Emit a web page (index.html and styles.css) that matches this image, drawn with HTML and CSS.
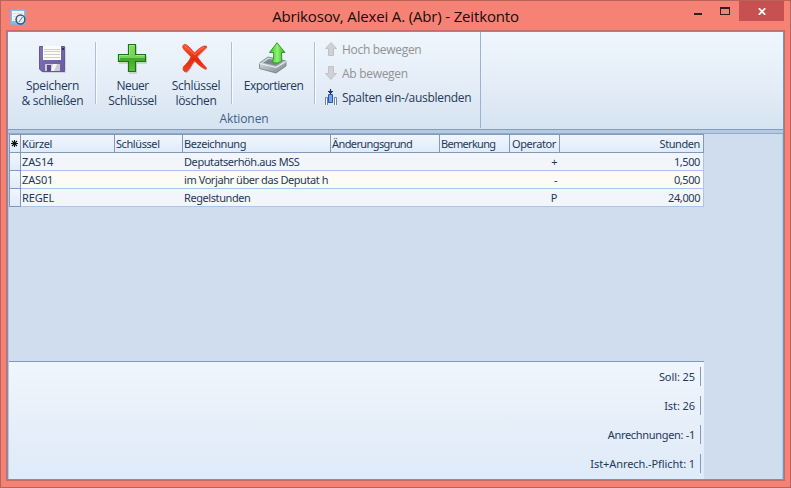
FILE: index.html
```html
<!DOCTYPE html>
<html lang="de">
<head>
<meta charset="utf-8">
<title>Abrikosov, Alexei A. (Abr) - Zeitkonto</title>
<link rel="stylesheet" href="styles.css">
</head>
<body>
<div class="window">
  <header class="titlebar">
    <svg class="app-icon" width="16" height="16" viewBox="0 0 16 16">
      <rect x=".5" y=".5" width="15" height="15" rx="1" fill="#8fb5e0" stroke="#86aede"/>
      <path d="M2 2h12v10H2z" fill="#f4f6f8"/>
      <path d="M3 4.500h10M3 7.500h4M3 10.500h3" stroke="#d8dee5"/>
      <circle cx="10.500" cy="10.500" r="4.400" fill="#e4eef7" stroke="#3c5673" stroke-width="1.500"/>
      <path d="M9 13l3.500-5" stroke="#63778c"/>
    </svg>
    <h1>Abrikosov, Alexei A. (Abr) - Zeitkonto</h1>
    <div class="controls">
      <svg width="50" height="20" viewBox="0 0 50 20"><path d="M6 12h8v2H6z" fill="#2b2022"/><path d="M32 6h10v8H32zM33 8v5h8V8z" fill="#2b2022" fill-rule="evenodd"/></svg>
      <div class="close"><svg width="8" height="7" viewBox="0 0 8 7"><path d="M.8.2l6.400 6.600M7.200.2L.8 6.800" stroke="#fff" stroke-width="1.800"/></svg></div>
    </div>
  </header>
  <main class="client">
    <section class="ribbon">
      <div class="group">
        <div class="tools">
          <button class="big save">
            <svg width="32" height="32" viewBox="0 0 32 32">
              <defs><linearGradient id="sv" x2="1" y2="1"><stop stop-color="#8171b5"/><stop offset="1" stop-color="#6a5aa3"/></linearGradient></defs>
              <path d="M4 5h26v26H7l-3-3z" fill="#7d8698" opacity=".25"/>
              <path d="M3.500 4.500h25v25H6l-2.500-2.500z" fill="url(#sv)" stroke="#6656a1"/>
              <path d="M7 4h18v14H7z" fill="#fcfcf9"/><path d="M8 7.500h16M8 9.500h16M8 12.500h16M8 15.500h16" stroke="#d0d0ca"/>
              <path d="M9 22h15v7H9z" fill="#cbcbd3"/><path d="M11 23h4v6h-4z" fill="#5b4c91"/><path d="M17 22h4l-3 7h-3z" fill="#f5f5f7"/><path d="M26 6h2v2h-2z" fill="#352969"/>
            </svg>
            <span class="mid">Speichern</span><span class="mid">&amp; schließen</span>
          </button>
          <i class="sep"></i>
          <button class="big new">
            <svg width="32" height="32" viewBox="0 0 32 32">
              <defs><linearGradient id="gr" x2="0" y2="1"><stop stop-color="#84dc63"/><stop offset=".49" stop-color="#79d057"/><stop offset=".52" stop-color="#43a62b"/><stop offset="1" stop-color="#68bf3c"/></linearGradient></defs>
              <path d="M13 4h8v10h10v8H21v10h-8V22H3v-8h10z" fill="#53664f" opacity=".2"/>
              <path d="M12.500 2.500h7v10h10v7h-10v10h-7v-10h-10v-7h10z" fill="url(#gr)" stroke="#117a10" stroke-width="1.200"/>
              <path d="M13.500 13V3.500h5M3.500 18v-4.500h9M20 13.500h8.500" fill="none" stroke="#a5ea83" stroke-width=".8"/>
            </svg>
            <span class="tight">Neuer</span><span class="mid">Schlüssel</span>
          </button>
          <button class="big delete">
            <svg width="32" height="32" viewBox="0 0 32 32">
              <defs><linearGradient id="rd" x2="0" y2="1"><stop stop-color="#ff5435"/><stop offset=".55" stop-color="#e42a0c"/><stop offset="1" stop-color="#f44223"/></linearGradient></defs>
              <path d="M3.500 3c2-2 5 1 11 8 5-5 8-7 11-7l1.500.7-10 9.800c3 4 5 7 9.500 11.500l-1 1.300c-4-2-8-5-11-8.500-4 5-5 9-8 11-3 0-4-2-3-5 3-3 6-6 7.500-10C7 10 .5 6 3.500 3z" fill="#806060" opacity=".25" transform="translate(1 1)"/>
              <path d="M3.500 3c2-2 5 1 11 8 5-5 8-7 11-7l1.500.7-10 9.800c3 4 5 7 9.500 11.500l-1 1.300c-4-2-8-5-11-8.500-4 5-5 9-8 11-3 0-4-2-3-5 3-3 6-6 7.500-10C7 10 .5 6 3.500 3z" fill="url(#rd)" stroke="#ec3414" stroke-width=".9"/>
              <path d="M4.500 3.800c4 3 7 6 10.500 9 3-4 6-6 9-7.500" fill="none" stroke="#ff8a6c" stroke-width="1" opacity=".7"/>
            </svg>
            <span class="mid">Schlüssel</span><span class="mid">löschen</span>
          </button>
          <i class="sep"></i>
          <button class="big export">
            <svg width="32" height="32" viewBox="0 0 32 32">
              <defs><linearGradient id="tr" x2="1" y2="1"><stop stop-color="#e1e7e9"/><stop offset="1" stop-color="#788790"/></linearGradient><linearGradient id="ua" x2="1"><stop stop-color="#37bb24"/><stop offset=".5" stop-color="#91f26d"/><stop offset="1" stop-color="#34aa25"/></linearGradient></defs>
              <path d="M3.500 21l8.500-6 18 4v5l-10 7-16.500-4.500z" fill="url(#tr)" stroke="#6c7c84" stroke-width=".8"/>
              <path d="M3.500 21.500L20 25.500l10-6" fill="none" stroke="#eef3f5" stroke-width="1.100"/>
              <path d="M7 21l6-4 13 2.500-6 4z" fill="#7b8992"/>
              <path d="M21 .8l8 9.700h-3.500l.3 8.500c-4 3-8 2-10 1 2-3 2-5 1.700-9.500h-4z" fill="url(#ua)" stroke="#219322" stroke-width=".9"/>
            </svg>
            <span class="tight">Exportieren</span>
          </button>
          <i class="sep"></i>
          <div class="small-tools">
            <button class="small off"><svg width="14" height="16" viewBox="0 0 14 16"><path d="M7 1.500l5.500 6H9.500v7h-5v-7h-3z" fill="#cfd1d6" stroke="#c0c2c8"/></svg><span class="mid">Hoch bewegen</span></button>
            <button class="small off"><svg width="14" height="16" viewBox="0 0 14 16"><path d="M7 14.500l5.500-6h-3v-7h-5v7h-3z" fill="#cfd1d6" stroke="#c0c2c8"/></svg><span class="mid">Ab bewegen</span></button>
            <button class="small"><svg width="14" height="16" viewBox="0 0 14 16"><path d="M1.500 16V8.500h2V16M10.500 16V8.500h2V16" fill="#fff" stroke="#74819b"/><path d="M4.500 5.500h4v8h-4z" fill="#6fa5ff" stroke="#2854af"/><path d="M6.500 0v5M4 2.500h5M5 3.500h3" stroke="#263650" stroke-width="1.200"/></svg><span class="mid">Spalten ein-/ausblenden</span></button>
          </div>
        </div>
        <div class="caption">Aktionen</div>
      </div>
    </section>
    <section class="content">
      <div class="grid">
        <div class="row head">
          <div class="mark"><svg width="9" height="9" viewBox="0 0 9 9"><path d="M4.500 1v7M1 4.500h7M2 2l5 5M7 2L2 7" stroke="#111" stroke-width="1.100"/></svg></div>
          <div>Kürzel</div><div>Schlüssel</div><div>Bezeichnung</div><div class="long">Änderungsgrund</div><div class="long narrow">Bemerkung</div><div class="op">Operator</div><div class="num">Stunden</div>
        </div>
        <div class="row"><div class="mark"></div><div class="key">ZAS14</div><div></div><div>Deputatserhöh.aus MSS</div><div></div><div></div><div class="num">+</div><div class="num">1,500</div></div>
        <div class="row alt"><div class="mark"></div><div class="key">ZAS01</div><div></div><div class="cut">im Vorjahr über das Deputat h</div><div></div><div></div><div class="num">-</div><div class="num">0,500</div></div>
        <div class="row"><div class="mark"></div><div class="key">REGEL</div><div></div><div>Regelstunden</div><div></div><div></div><div class="num">P</div><div class="num">24,000</div></div>
      </div>
      <footer class="summary">
        <div>Soll: 25</div><div>Ist: 26</div><div class="squeeze">Anrechnungen: -1</div><div>Ist+Anrech.-Pflicht: 1</div>
      </footer>
    </section>
  </main>
</div>
</body>
</html>
```
FILE: styles.css
```css
*, *::before { box-sizing: border-box; }
body { margin: 0; }
.window { width: 791px; height: 488px; padding: 0 6px 7px; border: 1px solid #b9635a; background: #f68175; display: flex; flex-direction: column; font-family: "Noto Sans", sans-serif; color: #1e395b; }
.titlebar { height: 29px; display: flex; position: relative; flex: none; }
.app-icon { margin: 8px 0 0 3px; }
h1 { margin: 0; position: absolute; left: 0; right: 0; top: 5px; text-align: center; font: 400 15px/21px "Open Sans", sans-serif; letter-spacing: -.16px; color: #170c0b; white-space: nowrap; }
.controls { margin-left: auto; display: flex; gap: 1px; height: 20px; }
.close { width: 45px; height: 20px; background: #c75050; display: flex; align-items: center; justify-content: center; padding-top: 1px; }
.client { flex: 1; border: 1px solid #8091ad; outline: 1px solid #c56a64; background: #cfddee; min-height: 0; display: flex; flex-direction: column; margin: 1px 0 0; }
.ribbon { height: 98px; flex: none; border-bottom: 1px solid #849dbd; background: linear-gradient(#eff6fd, #e4edf7 55%, #d6e3f1); display: flex; }
.group { width: 473px; height: 96px; border-right: 1px solid #9db2ce; }
.tools { height: 79px; display: flex; padding-top: 10px; }
button { border: 0; padding: 0; background: none; color: inherit; font: 12px/15px "Open Sans", sans-serif; white-space: nowrap; }
.mid { letter-spacing: -.3px; }
.tight { letter-spacing: -.55px; }
.big { display: flex; flex-direction: column; align-items: center; flex: none; height: 68px; }
.big svg { margin-bottom: 4px; flex: none; }
.save { width: 87px; padding-left: 2px; }
.save svg, .new svg { margin-left: -2px; }
.new { width: 71px; }
.delete { width: 56px; margin-right: 7px; }
.export { width: 81px; }
.export svg { margin-left: -3px; }
.sep { width: 2px; height: 62px; flex: none; background: linear-gradient(90deg, #afbfd6 50%, #f7fbff 50%); }
.small-tools { display: flex; flex-direction: column; margin: -5px 0 0 8px; }
.small { height: 24px; display: flex; align-items: center; gap: 4px; }
.off { color: #929292; }
.caption { font: 12px/16px "Open Sans", sans-serif; letter-spacing: -.1px; text-align: center; color: #3e5f87; }
.content { flex: 1; min-height: 0; border: 1px solid #b4c8e0; border-top: 0; border-bottom: 0; display: flex; flex-direction: column; justify-content: space-between; }
.content::before { content: ""; height: 4px; flex: none; margin: 0 -1px; background: #b5c9e0; border-bottom: 1px solid #91a9c8; }
.grid { width: 695px; margin-bottom: auto; border-left: 1px solid #8099bd; font-size: 11px; line-height: 17px; letter-spacing: -.42px; }
.row { display: grid; grid-template-columns: 11px 94px 68px 148px 109px 70px 50px 144px; height: 18px; background: #f2f6fb; }
.row > div { padding: 0 2px 0 1px; border-bottom: 1px solid #a9c6e8; white-space: nowrap; }
.row > div:last-child { border-right: 1px solid #a9c6e8; }
.row.alt { background: #fcfcf4; }
.head { height: 19px; background: linear-gradient(#f1f6fd, #dfebf8); border-top: 1px solid #8099bd; }
.head > div, .head > div:last-child { border-right: 1px solid #8099bd; border-bottom-color: #8099bd; }
.row > .mark { padding: 0; border-right: 1px solid #8099bd; border-bottom-color: #8099bd; background: linear-gradient(#f1f6fd, #dfebf8); }
.mark svg { display: block; margin: 4px 0 0; }
.row > .num { text-align: right; padding-right: 3px; }
.row > .key { letter-spacing: -.15px; }
.row > .long { letter-spacing: -.6px; }
.row > .narrow { letter-spacing: -.7px; }
.row > .op { padding-left: 2px; }
.row > .cut { letter-spacing: -.43px; }
.summary { width: 695px; height: 118px; flex: none; border-top: 1px solid #8099bd; background: linear-gradient(#f0f6fd, #e6eef9 55%, #deebf8); padding: 5px 3px 0 0; display: flex; flex-direction: column; gap: 10px; font-size: 11px; line-height: 20px; letter-spacing: -.08px; }
.summary div { height: 19px; text-align: right; padding-right: 5px; border-right: 1px solid #8099bd; }
.summary .squeeze { letter-spacing: -.31px; }
```
